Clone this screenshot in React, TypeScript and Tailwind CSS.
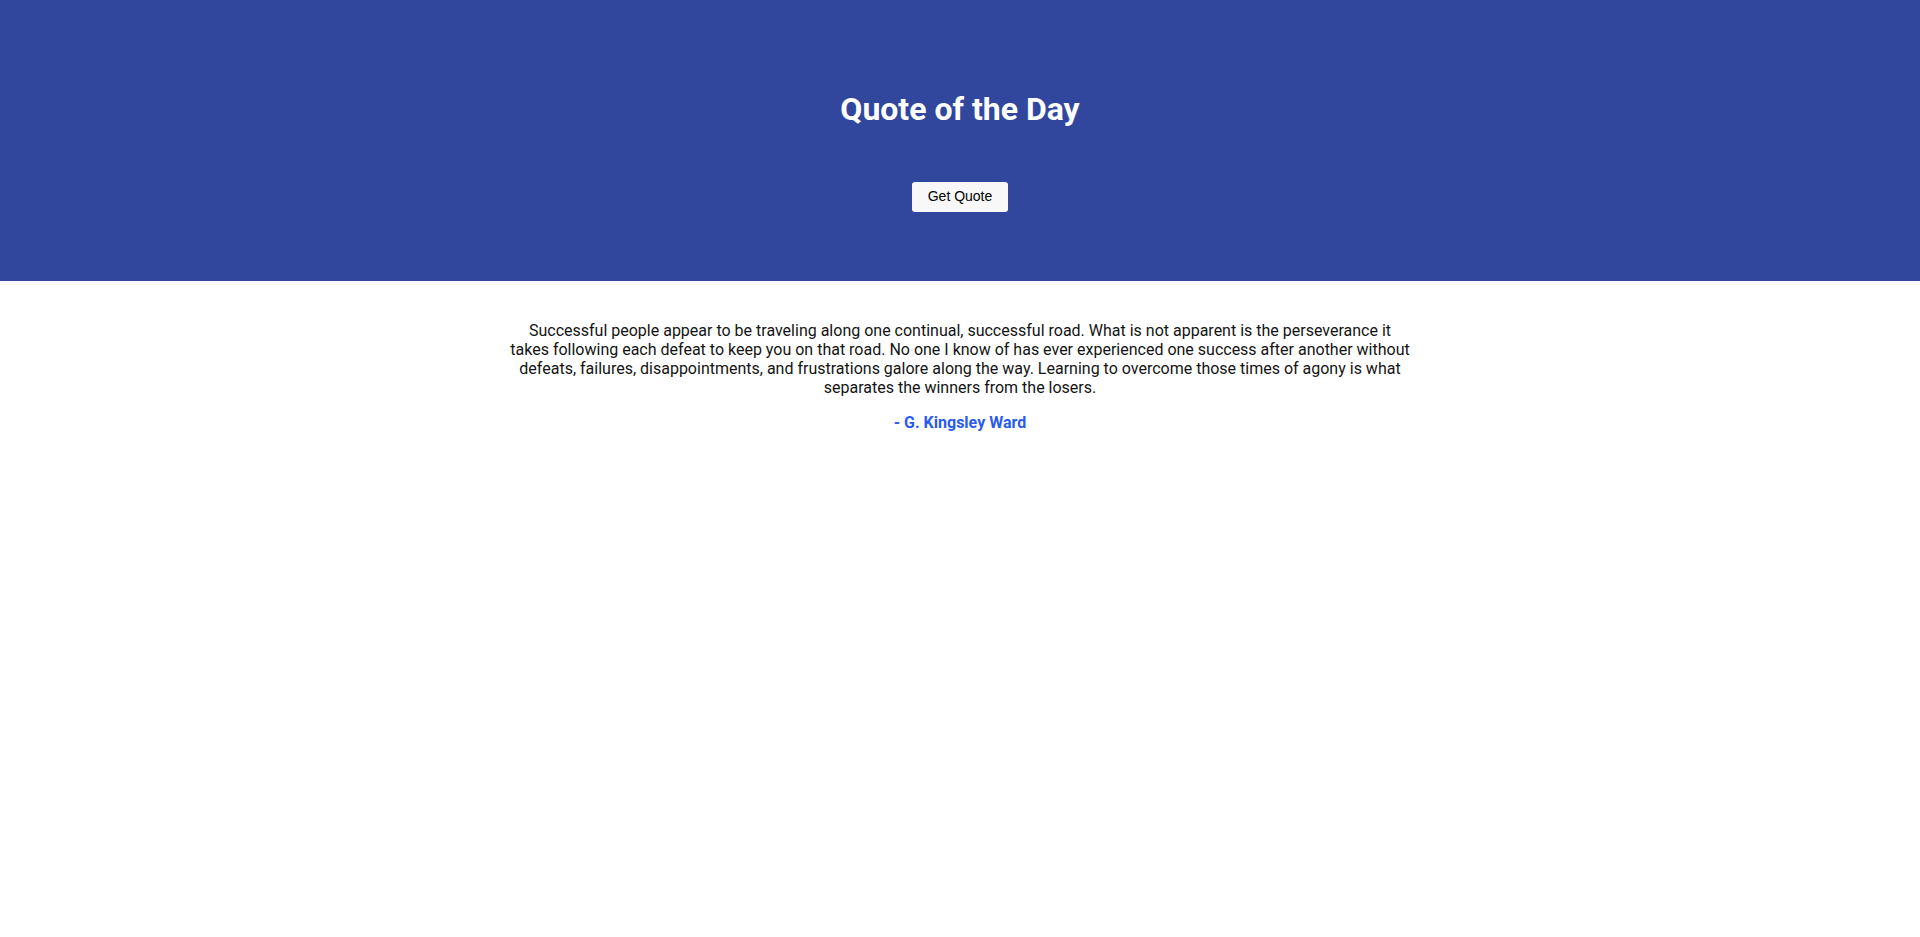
import React, { useState } from "react";

const quotes = [
  {
    text: "Successful people appear to be traveling along one continual, successful road. What is not apparent is the perseverance it takes following each defeat to keep you on that road. No one I know of has ever experienced one success after another without defeats, failures, disappointments, and frustrations galore along the way. Learning to overcome those times of agony is what separates the winners from the losers.",
    author: "G. Kingsley Ward",
  },
  {
    text: "The only way to do great work is to love what you do.",
    author: "Steve Jobs",
  },
];

export default function App() {
  const [idx, setIdx] = useState(0);
  const q = quotes[idx];

  return (
    <div className="min-h-[937px] bg-white font-['Roboto',sans-serif]">
      <header className="bg-[#31479e] h-[281px] pt-[91px] flex flex-col items-center">
        <h1 className="text-white text-[32px] leading-[37.5px] font-bold">Quote of the Day</h1>
        <button
          className="mt-[53px] h-[30px] px-4 rounded-[3px] bg-[#f8f8f8] text-black text-[14px] font-['Liberation_Sans',Arial,sans-serif] cursor-pointer"
          onClick={() => setIdx((idx + 1) % quotes.length)}
        >
          Get Quote
        </button>
      </header>
      <main className="max-w-[900px] mx-auto pt-6 text-center">
        <p className="mt-4 text-[16px] leading-[19px] text-[#141414]">{q.text}</p>
        <p className="mt-4 text-[16px] leading-[19px] font-bold text-[#2a5bf0]">- {q.author}</p>
      </main>
    </div>
  );
}
